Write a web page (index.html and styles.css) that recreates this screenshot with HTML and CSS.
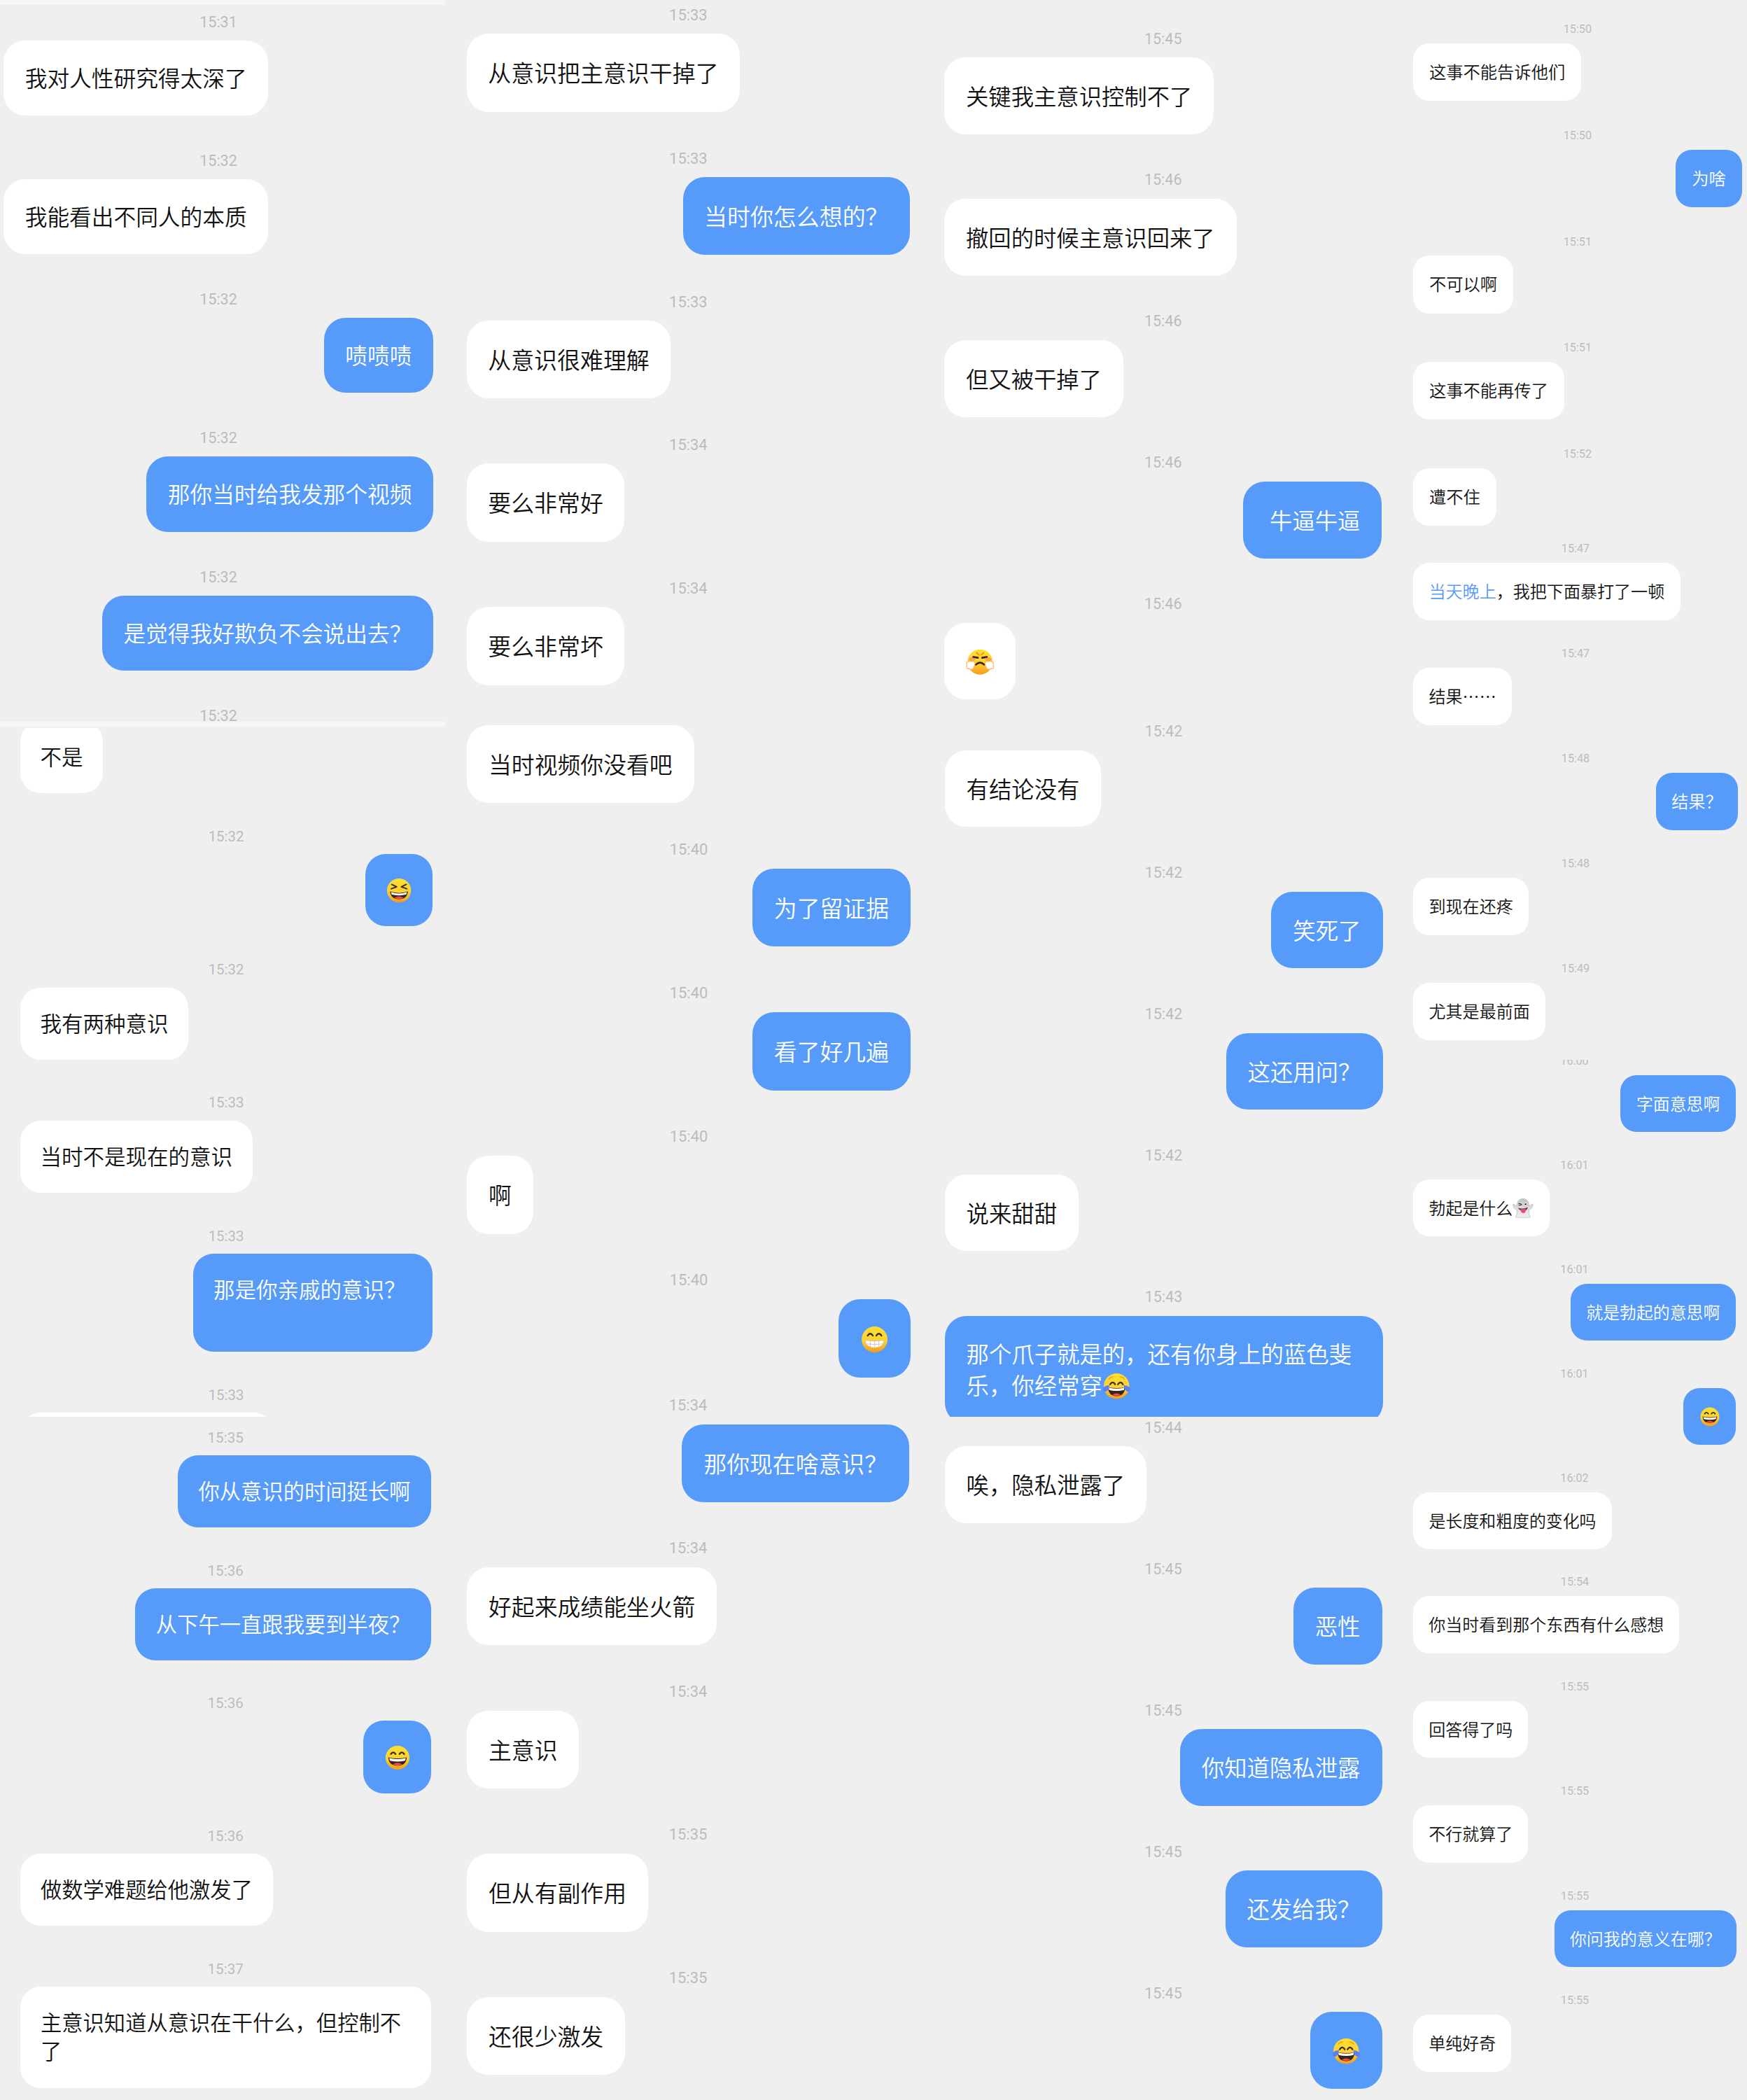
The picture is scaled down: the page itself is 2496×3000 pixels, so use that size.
FILE: index.html
```html
<!DOCTYPE html>
<html lang="zh-CN">
<head>
<meta charset="utf-8">
<title>聊天记录</title>
<link rel="stylesheet" href="styles.css">
</head>
<body>
<svg class="defs" width="0" height="0">
  <defs>
    <linearGradient id="skin" x1="0" y1="0" x2="0" y2="1">
      <stop offset="0" stop-color="#fde030"/><stop offset="0.55" stop-color="#fdd22f"/><stop offset="1" stop-color="#f59a1d"/>
    </linearGradient>
    <linearGradient id="sheet" x1="0" y1="0" x2="0" y2="1">
      <stop offset="0" stop-color="#c4c4c4"/><stop offset="0.5" stop-color="#dedede"/><stop offset="1" stop-color="#f2f2f2"/>
    </linearGradient>
    <symbol id="laugh-squint" viewBox="0 0 40 40">
      <circle cx="20" cy="20" r="18" fill="url(#skin)"/>
      <path d="M9 11l7.500 3.500-8 3M31 11l-7.500 3.500 8 3" fill="none" stroke="#3a2a20" stroke-width="2" stroke-linecap="round" stroke-linejoin="round"/>
      <path d="M6.500 21.500Q20 26 33.500 21.500Q32 33 20 33Q8 33 6.500 21.500z" fill="#33251f"/>
      <path d="M8 22.500Q20 27 32 22.500L31 26Q20 29 9 26z" fill="#fff"/>
      <path d="M13 31Q20 26.500 27 31Q20 34.500 13 31z" fill="#ee4b3e"/>
    </symbol>
    <symbol id="grin-eyes" viewBox="0 0 40 40">
      <circle cx="20" cy="20" r="18" fill="url(#skin)"/>
      <path d="M10 14.500Q13.500 9.500 17 14.500M23 14.500Q26.500 9.500 30 14.500" fill="none" stroke="#3a2a20" stroke-width="2.400" stroke-linecap="round"/>
      <path d="M6 19.500Q20 23 34 19.500Q33 32 20 32Q7 32 6 19.500z" fill="#33251f"/>
      <path d="M7.500 20.500Q20 24 32.500 20.500L31.500 24.500Q20 27 8.500 24.500z" fill="#fff"/>
      <path d="M13 30Q20 25.500 27 30Q20 33.500 13 30z" fill="#ee4b3e"/>
    </symbol>
    <symbol id="beam" viewBox="0 0 40 40">
      <circle cx="20" cy="20" r="18" fill="url(#skin)"/>
      <path d="M10.500 14.500Q14 9.500 17.500 14.500M22.500 14.500Q26 9.500 29.500 14.500" fill="none" stroke="#3a2a20" stroke-width="2.400" stroke-linecap="round"/>
      <path d="M7 21Q20 23.500 33 21Q32.500 31.500 20 31.500Q7.500 31.500 7 21z" fill="#fff" stroke="#d9b48c" stroke-width="0.800"/>
      <path d="M8 26Q20 28 32 26M14 22v8.500M20 22.500v9M26 22v8.500" fill="none" stroke="#cfc3b6" stroke-width="0.900"/>
    </symbol>
    <symbol id="triumph" viewBox="0 0 40 40">
      <circle cx="20" cy="19.500" r="17.800" fill="url(#skin)"/>
      <path d="M15 6.500l3.500 3M25 6.500l-3.500 3" fill="none" stroke="#ee8a1c" stroke-width="1.800" stroke-linecap="round"/>
      <ellipse cx="8.500" cy="15.500" rx="4.500" ry="2.600" fill="#f58a5a" opacity="0.650"/>
      <ellipse cx="31.500" cy="15.500" rx="4.500" ry="2.600" fill="#f58a5a" opacity="0.650"/>
      <path d="M10.500 12.300l6.500 1.200M29.500 12.300l-6.500 1.200" fill="none" stroke="#33251f" stroke-width="2.600" stroke-linecap="round"/>
      <path d="M14 23.300Q20 17.500 26 23.300" fill="none" stroke="#33251f" stroke-width="2.400" stroke-linecap="round"/>
      <path d="M12 19.500q-2-1.500-4-0.500q-2-1.500-4 0q-3 0-3 3q1 2-0.200 4q0 3.500 4 3q3 2 5 0q2-0.500 1.500-3q2-1 1-3.200q1.500-2-0.300-3.300zM28 19.500q2-1.500 4-0.500q2-1.500 4 0q3 0 3 3q-1 2 0.200 4q0 3.500-4 3q-3 2-5 0q-2-0.500-1.500-3q-2-1-1-3.200q-1.500-2 0.300-3.300z" fill="#fff" stroke="#fbb14c" stroke-width="1.100"/>
    </symbol>
    <symbol id="joy" viewBox="0 0 40 40">
      <circle cx="20" cy="20" r="18" fill="url(#skin)"/>
      <path d="M9 10q2.500-3 6-3M31 10q-2.500-3-6-3" fill="none" stroke="#f0a41f" stroke-width="1.500" stroke-linecap="round"/>
      <path d="M11 17.500Q14.500 12 18 17.500M22 17.500Q25.500 12 29 17.500" fill="none" stroke="#3a2a20" stroke-width="2.200" stroke-linecap="round"/>
      <path d="M8 21.500Q20 24 32 21.500Q31.500 34 20 34Q8.500 34 8 21.500z" fill="#33251f"/>
      <path d="M9 22Q20 25 31 22L30.500 25.500Q20 28 9.500 25.500z" fill="#fff"/>
      <path d="M14 32Q20 28 26 32Q20 35 14 32z" fill="#ee4b3e"/>
      <path d="M10 18.500Q1 19.500 0.500 24.500Q1 28.500 5 27.500Q9 26 10 18.500zM30 18.500Q39 19.500 39.500 24.500Q39 28.500 35 27.500Q31 26 30 18.500z" fill="#5f7df7"/>
    </symbol>
    <symbol id="ghost" viewBox="0 0 40 40">
      <path d="M20 2C11 2 9 9 8.500 16Q5 15 2.500 12.500Q0.500 12 1 14.500Q2 21 9 24Q9 32 6 38Q10 36 12.500 38.500Q15 36 17.500 38.500Q20 36 22.500 38.500Q25 36 27.500 38.500Q30 36 34 38Q31 32 31 24Q38 21 39 14.500Q39.500 12 37.500 12.500Q35 15 31.500 16C31 9 29 2 20 2z" fill="url(#sheet)" stroke="#b4b4b4" stroke-width="0.900"/>
      <path d="M12 11.500q3-1 5.500 2q-3 1-5 1" fill="none" stroke="#333" stroke-width="1.500" stroke-linecap="round"/>
      <circle cx="25" cy="12.500" r="4" fill="#fff" stroke="#777" stroke-width="0.600"/>
      <circle cx="25" cy="12.500" r="1.700" fill="#222"/>
      <path d="M10.500 19.500Q20 22.500 29.500 18.500Q28 25 20 25Q13 25 10.500 19.500z" fill="#444"/>
      <path d="M15.500 21.500Q20 22 25 21Q26 29.500 20.500 29.500Q15.500 29.500 15.500 21.500z" fill="#f0447a"/>
    </symbol>
  </defs>
</svg>

<main class="board">

  <section class="column column-1">
    <div class="seam seam-top"></div>
    <div class="panel p1a"><ol class="chat">
      <li class="msg"><time>15:31</time><p>我对人性研究得太深了</p></li>
      <li class="msg"><time>15:32</time><p>我能看出不同人的本质</p></li>
      <li class="msg me"><time>15:32</time><p>啧啧啧</p></li>
      <li class="msg me"><time>15:32</time><p>那你当时给我发那个视频</p></li>
      <li class="msg me"><time>15:32</time><p>是觉得我好欺负不会说出去？</p></li>
      <li class="msg"><time>15:32</time></li>
    </ol></div>
    <div class="seam"></div>
    <div class="panel p1b"><ol class="chat">
      <li class="msg"><time></time><p>不是</p></li>
      <li class="msg me"><time>15:32</time><p><svg class="emoji"><use href="#laugh-squint"/></svg></p></li>
      <li class="msg"><time>15:32</time><p>我有两种意识</p></li>
      <li class="msg"><time>15:33</time><p>当时不是现在的意识</p></li>
      <li class="msg me"><time>15:33</time><p class="tall roomy">那是你亲戚的意识？</p></li>
      <li class="msg"><time>15:33</time><p class="stub"></p></li>
    </ol></div>
    <div class="panel p1c"><ol class="chat">
      <li class="msg me"><time>15:35</time><p>你从意识的时间挺长啊</p></li>
      <li class="msg me"><time>15:36</time><p>从下午一直跟我要到半夜？</p></li>
      <li class="msg me"><time>15:36</time><p><svg class="emoji"><use href="#grin-eyes"/></svg></p></li>
      <li class="msg"><time>15:36</time><p>做数学难题给他激发了</p></li>
      <li class="msg"><time>15:37</time><p class="tall full">主意识知道从意识在干什么，但控制不<br>了</p></li>
    </ol></div>
  </section>

  <section class="column column-2">
    <div class="panel p2a"><ol class="chat">
      <li class="msg"><time>15:33</time><p>从意识把主意识干掉了</p></li>
      <li class="msg me"><time>15:33</time><p>当时你怎么想的？</p></li>
      <li class="msg"><time>15:33</time><p>从意识很难理解</p></li>
      <li class="msg"><time>15:34</time><p>要么非常好</p></li>
      <li class="msg"><time>15:34</time><p>要么非常坏</p></li>
    </ol></div>
    <div class="panel p2b"><ol class="chat">
      <li class="msg"><time></time><p>当时视频你没看吧</p></li>
      <li class="msg me"><time>15:40</time><p>为了留证据</p></li>
      <li class="msg me"><time>15:40</time><p>看了好几遍</p></li>
      <li class="msg"><time>15:40</time><p>啊</p></li>
      <li class="msg me"><time>15:40</time><p><svg class="emoji"><use href="#beam"/></svg></p></li>
    </ol></div>
    <div class="panel p2c"><ol class="chat">
      <li class="msg me"><time>15:34</time><p>那你现在啥意识？</p></li>
      <li class="msg"><time>15:34</time><p>好起来成绩能坐火箭</p></li>
      <li class="msg"><time>15:34</time><p>主意识</p></li>
      <li class="msg"><time>15:35</time><p>但从有副作用</p></li>
      <li class="msg"><time>15:35</time><p>还很少激发</p></li>
    </ol></div>
  </section>

  <section class="column column-3">
    <div class="panel p3a"><ol class="chat">
      <li class="msg"><time>15:45</time><p>关键我主意识控制不了</p></li>
      <li class="msg"><time>15:46</time><p>撤回的时候主意识回来了</p></li>
      <li class="msg"><time>15:46</time><p>但又被干掉了</p></li>
      <li class="msg me"><time>15:46</time><p>&nbsp;牛逼牛逼</p></li>
      <li class="msg"><time>15:46</time><p><svg class="emoji"><use href="#triumph"/></svg></p></li>
    </ol></div>
    <div class="panel p3b"><ol class="chat">
      <li class="msg"><time>15:42</time><p>有结论没有</p></li>
      <li class="msg me"><time>15:42</time><p>笑死了</p></li>
      <li class="msg me"><time>15:42</time><p>这还用问？</p></li>
      <li class="msg"><time>15:42</time><p>说来甜甜</p></li>
      <li class="msg me"><time>15:43</time><p class="tall full">那个爪子就是的，还有你身上的蓝色斐<br>乐，你经常穿<svg class="emoji"><use href="#joy"/></svg></p></li>
    </ol></div>
    <div class="panel p3c"><ol class="chat">
      <li class="msg"><time>15:44</time><p>唉，隐私泄露了</p></li>
      <li class="msg me"><time>15:45</time><p>恶性</p></li>
      <li class="msg me"><time>15:45</time><p>你知道隐私泄露</p></li>
      <li class="msg me"><time>15:45</time><p>还发给我？</p></li>
      <li class="msg me"><time>15:45</time><p><svg class="emoji"><use href="#joy"/></svg></p></li>
    </ol></div>
  </section>

  <section class="column column-4">
    <div class="panel p4a"><ol class="chat">
      <li class="msg"><time>15:50</time><p>这事不能告诉他们</p></li>
      <li class="msg me"><time>15:50</time><p>为啥</p></li>
      <li class="msg"><time>15:51</time><p>不可以啊</p></li>
      <li class="msg"><time>15:51</time><p>这事不能再传了</p></li>
      <li class="msg"><time>15:52</time><p>遭不住</p></li>
    </ol></div>
    <div class="panel p4b"><ol class="chat">
      <li class="msg"><time>15:47</time><p><span class="link">当天晚上</span>，我把下面暴打了一顿</p></li>
      <li class="msg"><time>15:47</time><p>结果……</p></li>
      <li class="msg me"><time>15:48</time><p>结果？</p></li>
      <li class="msg"><time>15:48</time><p>到现在还疼</p></li>
      <li class="msg"><time>15:49</time><p>尤其是最前面</p></li>
    </ol></div>
    <div class="panel p4c"><ol class="chat">
      <li class="msg me"><time>16:00</time><p>字面意思啊</p></li>
      <li class="msg"><time>16:01</time><p>勃起是什么<svg class="emoji"><use href="#ghost"/></svg></p></li>
      <li class="msg me"><time>16:01</time><p>就是勃起的意思啊</p></li>
      <li class="msg me"><time>16:01</time><p><svg class="emoji"><use href="#grin-eyes"/></svg></p></li>
      <li class="msg"><time>16:02</time><p>是长度和粗度的变化吗</p></li>
    </ol></div>
    <div class="panel p4d"><ol class="chat">
      <li class="msg"><time>15:54</time><p>你当时看到那个东西有什么感想</p></li>
      <li class="msg"><time>15:55</time><p>回答得了吗</p></li>
      <li class="msg"><time>15:55</time><p>不行就算了</p></li>
      <li class="msg me"><time>15:55</time><p>你问我的意义在哪？</p></li>
      <li class="msg"><time>15:55</time><p>单纯好奇</p></li>
    </ol></div>
  </section>

</main>
</body>
</html>
```

FILE: styles.css
```css
* { box-sizing: border-box; }

body {
  margin: 0;
  background: #efefef;
  font-family: "Noto Sans CJK SC", "Noto Sans", sans-serif;
  color: #111;
}

.defs { display: block; position: absolute; }

.board {
  display: grid;
  grid-template-columns: 636px 684px 670px 506px;
  width: 2496px;
  height: 3000px;
  overflow: hidden;
}

.column { display: flex; flex-direction: column; height: 3000px; }

.seam { flex: none; height: 7px; margin: 0 0 2px; background: #f6f6f6; }
.seam-top { margin: 0; }

.panel { flex: none; overflow: hidden; }

.chat {
  list-style: none;
  margin: var(--start) 0 0;
  padding: 0;
  display: flex;
  flex-direction: column;
  gap: var(--gap);
}

.msg { display: flex; flex-direction: column; align-items: flex-start; }
.msg.me { align-items: flex-end; }

.msg time {
  align-self: center;
  height: calc(var(--lead) * 2);
  padding-top: 1px;
  line-height: calc(var(--lead) * 2);
  font-family: Roboto, "Liberation Sans", sans-serif;
  font-size: var(--time, 21.5px);
  color: #bcbcbc;
}

.msg p {
  margin: 0;
  height: var(--h);
  padding: 0 var(--pad);
  border-radius: var(--r, 31px);
  background: #fff;
  font-size: var(--fs);
  font-weight: 350;
  line-height: calc(var(--h) - 2px);
  white-space: nowrap;
}
.msg.me p { background: #579bfa; color: #fff; }

.msg p.tall { height: var(--tall); line-height: var(--line); padding-top: calc((var(--h) - var(--line)) / 2 - 1px); }
.msg p.full { width: 100%; }
.msg p.roomy { width: 341.4px; }
.msg p.stub { width: 363px; }

.emoji { width: 1.25em; height: 1.25em; vertical-align: -0.27em; }
.link { color: #579bfa; }

.p1a { height: 1024px; padding: 0 17px 0 5px; --start: -4.5px; --gap: 36px; --lead: 27.5px; --h: 107.3px; --pad: 30.7px; --fs: 31.7px; }
.p1b { height: 984px; padding: 0 18.5px 0 28.6px; --start: -62.6px; --gap: 34.5px; --lead: 26.3px; --h: 103.2px; --pad: 28.8px; --fs: 30.5px; --tall: 140px; --line: 37px; --time: 20.4px; --r: 29px; }
.p1c { height: 976px; padding: 0 20.2px 0 28.6px; --start: 2.9px; --gap: 34.35px; --lead: 26px; --h: 103.4px; --pad: 29.4px; --fs: 30.3px; --tall: 145px; --line: 41.3px; --time: 20.6px; --r: 29px; }

.p2a { height: 1020px; padding: 0 20.3px 0 31px; --start: -6.8px; --gap: 38.25px; --lead: 27.5px; --h: 111.5px; --pad: 30.2px; --fs: 32.95px; --time: 21.9px; }
.p2b { height: 965px; padding: 0 19px 0 31px; --start: -40px; --gap: 37.7px; --lead: 28.1px; --h: 111.2px; --pad: 31px; --fs: 32.85px; --time: 21.9px; }
.p2c { height: 1015px; padding: 0 21px 0 31px; --start: -6.4px; --gap: 37.4px; --lead: 28px; --h: 111.2px; --pad: 31px; --fs: 32.85px; --time: 21.9px; }

.p3a { height: 1010px; padding: 0 15.6px 0 29px; --start: 27.6px; --gap: 37.2px; --lead: 27.4px; --h: 109.8px; --pad: 31px; --fs: 32.35px; }
.p3b { height: 1014px; padding: 0 14.5px 0 29.5px; --start: 6px; --gap: 36.6px; --lead: 28px; --h: 109.4px; --pad: 31px; --fs: 32.4px; --tall: 155px; --line: 44.8px; }
.p3c { height: 976px; padding: 0 15.5px 0 29.5px; --start: -12.4px; --gap: 38px; --lead: 27.2px; --h: 109.6px; --pad: 31px; --fs: 32.4px; }

.column-4 { --time: 16.2px; --r: 23px; }
.p4a { height: 765px; padding: 0 7.3px 0 29px; --start: 20.4px; --gap: 27.6px; --lead: 20.9px; --h: 82.2px; --pad: 22.9px; --fs: 24.3px; }
.p4b { height: 749px; padding: 0 13px 0 29px; --start: -1.9px; --gap: 27.1px; --lead: 20.4px; --h: 82.1px; --pad: 22.5px; --fs: 24.05px; }
.p4c { height: 726px; padding: 0 16px 0 29px; --start: -19.2px; --gap: 27.1px; --lead: 20.4px; --h: 81.2px; --pad: 22.6px; --fs: 23.9px; }
.p4d { height: 760px; padding: 0 15px 0 29px; --start: -0.7px; --gap: 27.2px; --lead: 20.4px; --h: 81.5px; --pad: 22.2px; --fs: 24px; }
```
